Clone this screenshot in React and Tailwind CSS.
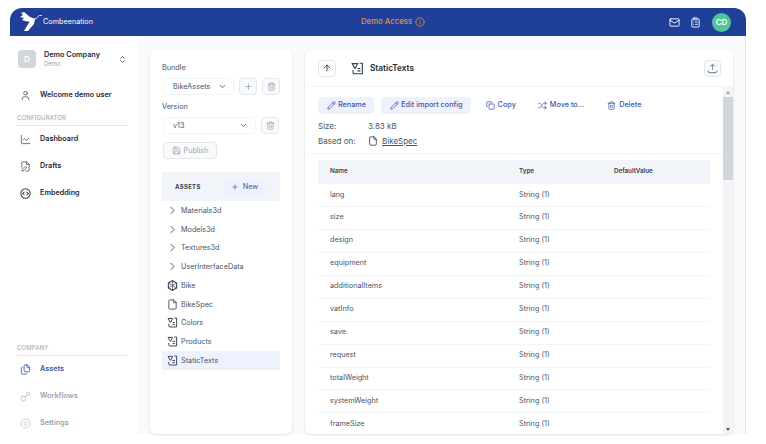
import {
  ArrowUp,
  ChevronDown,
  ChevronRight,
  ChevronsUpDown,
  ClipboardList,
  Copy,
  File,
  Files,
  Info,
  LineChart,
  Mail,
  Pencil,
  Plus,
  Shuffle,
  Trash2,
  User,
  FilePen,
  Save,
} from "lucide-react";

const assets = [
  { name: "Materials3d", type: "folder" },
  { name: "Models3d", type: "folder" },
  { name: "Textures3d", type: "folder" },
  { name: "UserInterfaceData", type: "folder" },
  { name: "Bike", type: "model" },
  { name: "BikeSpec", type: "file" },
  { name: "Colors", type: "text" },
  { name: "Products", type: "text" },
  { name: "StaticTexts", type: "text", active: true },
];

const rows = [
  "lang",
  "size",
  "design",
  "equipment",
  "additionalItems",
  "vatInfo",
  "save",
  "request",
  "totalWeight",
  "systemWeight",
  "frameSize",
];

const Logo = () => (
  <svg width="23" height="20" viewBox="0 0 23 20" fill="none">
    <path d="M0 5 L3 3 L1 1 L4 0 L10 5 L15 7 L11 10 L5 9 L2 8 L4 6 Z" fill="#fff" />
    <path d="M10 9 L15 7 L14 12 L8 19 L4 19 L7 14 Z" fill="#fff" />
    <path d="M14 7 Q17 7 18 4.5 Q19 3 22 3.5" stroke="#fff" strokeWidth="0.8" />
  </svg>
);

const TextsIcon = ({ size = 12 }) => (
  <svg
    width={size}
    height={size}
    viewBox="0 0 16 16"
    fill="none"
    stroke="#374151"
    strokeWidth="1.4"
    className="shrink-0"
  >
    <path d="M1.5 2h6.5L5.5 7.5h-1z" />
    <path d="M10.5 1.5h3.5v13H4.5a2 2 0 0 1-2-2V10" />
    <path d="M8 8h3.5M8 11h3.5" />
  </svg>
);

const ModelIcon = () => (
  <svg width="11" height="11" viewBox="0 0 16 16" fill="none" stroke="#374151" strokeWidth="1.6" className="shrink-0">
    <path d="M8 1l6 3.5v7L8 15l-6-3.5v-7z" />
    <path d="M2 4.5l6 3.5 6-3.5M8 8v7M2 11.5L8 8l6 3.5M8 1v7" strokeWidth="1" />
  </svg>
);

const EmbedIcon = ({ className }) => (
  <svg width="11" height="11" viewBox="0 0 16 16" fill="none" stroke="currentColor" strokeWidth="1.5" className={className}>
    <circle cx="8" cy="8" r="6.8" />
    <path d="M6.5 5.5L4 8l2.5 2.5M9.5 5.5L12 8l-2.5 2.5" />
  </svg>
);

const WorkflowIcon = ({ className }) => (
  <svg width="11" height="11" viewBox="0 0 16 16" fill="none" stroke="currentColor" strokeWidth="1.8" className={className}>
    <circle cx="5" cy="11" r="3.4" />
    <circle cx="12" cy="4" r="2.2" />
    <path d="M7.5 8.5l3-3" />
  </svg>
);

const GearIcon = ({ className }) => (
  <svg width="11" height="11" viewBox="0 0 16 16" fill="none" stroke="currentColor" strokeWidth="1.5" className={className}>
    <circle cx="8" cy="8" r="6.5" />
    <circle cx="8" cy="8" r="2.4" />
  </svg>
);

const UploadIcon = () => (
  <svg width="11" height="11" viewBox="0 0 16 16" fill="none" stroke="#8a919c" strokeWidth="1.5">
    <path d="M8 10V2M5 5l3-3 3 3" />
    <path d="M1.5 11c0 2 1 3 3 3h7c2 0 3-1 3-3" />
  </svg>
);

const AssetIcon = ({ type }) => {
  if (type === "folder")
    return <ChevronRight size={13} strokeWidth={1.6} className="text-gray-700 -ml-[1px]" />;
  if (type === "model") return <ModelIcon />;
  if (type === "file") return <File size={11} strokeWidth={1.8} className="text-gray-700" />;
  return <TextsIcon size={11} />;
};

const NavItem = ({ icon: Icon, label, className = "text-gray-800", iconClass = "text-gray-700" }) => (
  <div className={`h-[27px] flex items-center pl-[3px] font-semibold text-[7.25px] ${className}`}>
    <span className="w-[20px] shrink-0">
      <Icon size={11} strokeWidth={1.6} className={iconClass} />
    </span>
    {label}
  </div>
);

const SmallBtn = ({ icon: Icon }) => (
  <div className="w-[18px] h-[17px] flex items-center justify-center border border-gray-200 rounded-sm bg-gray-50">
    <Icon size={9} className="text-gray-400" />
  </div>
);

const Sidebar = () => (
  <aside className="w-[127px] shrink-0 bg-white pl-[7px] pr-[10px] pt-[14px] flex flex-col">
    <div className="flex items-center gap-[8px]">
      <div className="ml-[1px] w-[18px] h-[18px] rounded-sm bg-gray-300 text-white text-[8px] font-bold flex items-center justify-center">
        D
      </div>
      <div className="flex-1 leading-[9px]">
        <div className="text-[7.25px] font-semibold text-gray-800 whitespace-nowrap">Demo Company</div>
        <div className="text-[6px] text-gray-400">Demo</div>
      </div>
      <ChevronsUpDown size={9} strokeWidth={2} className="text-gray-700" />
    </div>
    <div className="mt-[13.5px]">
      <NavItem icon={User} label="Welcome demo user" />
    </div>
    <div className="mt-[4.5px] text-[6px] leading-[10px] text-gray-400 tracking-wide border-b border-gray-200 pb-[2px]">
      CONFIGURATOR
    </div>
    <NavItem icon={LineChart} label="Dashboard" />
    <NavItem icon={FilePen} label="Drafts" />
    <NavItem icon={EmbedIcon} label="Embedding" />
    <div className="mt-auto -mb-[3px]">
      <div className="text-[6px] leading-[10px] text-gray-400 tracking-wide border-b border-gray-200 pb-[2px]">
        COMPANY
      </div>
      <NavItem icon={Files} label="Assets" className="text-[#3f57a6]" iconClass="text-blue-800" />
      <NavItem icon={WorkflowIcon} label="Workflows" className="text-gray-400" iconClass="text-gray-300" />
      <NavItem icon={GearIcon} label="Settings" className="text-gray-400" iconClass="text-gray-300" />
    </div>
  </aside>
);

const AssetsPanel = () => (
  <section className="w-[142px] shrink-0 bg-white rounded-md shadow-sm px-[12px] pt-[12px] text-slate-600 text-[7.25px] leading-[11px]">
    <div>Bundle</div>
    <div className="mt-[5px] flex gap-[5px] pl-[1px]">
      <div className="w-[71px] h-[17px] border border-gray-100 rounded-sm flex items-center justify-between pl-[9px] pr-[6px]">
        BikeAssets
        <ChevronDown size={9} className="text-gray-700" />
      </div>
      <SmallBtn icon={Plus} />
      <SmallBtn icon={Trash2} />
    </div>
    <div className="mt-[6px]">Version</div>
    <div className="mt-[5px] flex gap-[5px] pl-[1px]">
      <div className="w-[93px] h-[17px] border border-gray-100 rounded-sm flex items-center justify-between pl-[9px] pr-[7px]">
        v13
        <ChevronDown size={9} className="text-gray-700" />
      </div>
      <SmallBtn icon={Trash2} />
    </div>
    <div className="mt-[8px] ml-[1px] w-[54px] h-[17px] border border-gray-200 bg-gray-50 rounded-sm flex items-center justify-center gap-[3px] text-gray-400">
      <Save size={9} />
      Publish
    </div>
    <div className="mt-[13px] h-[29px] bg-slate-100 flex items-center pl-[13px] pr-[14px] justify-between">
      <span className="text-[6px] font-bold tracking-wider text-gray-700">ASSETS</span>
      <span className="w-[43px] h-[16px] bg-indigo-50 rounded-sm flex items-center justify-center gap-[4px] text-[#3f57a6]">
        <Plus size={8} />
        New
      </span>
    </div>
    {assets.map((a) => (
      <div
        key={a.name}
        className={`h-[18.75px] flex items-center pl-[5px] ${a.active ? "bg-indigo-50" : ""}`}
      >
        <span className="w-[14px] shrink-0 flex items-center">
          <AssetIcon type={a.type} />
        </span>
        {a.name}
      </div>
    ))}
  </section>
);

const Action = ({ icon: Icon, label, filled, className = "" }) => (
  <div
    className={`h-[17px] flex items-center text-[#3f57a6] text-[7.25px] font-medium rounded-sm ${
      filled ? "bg-indigo-50 pl-[9px] pr-[8px] gap-[2px]" : "gap-[3px]"
    } ${className}`}
  >
    <Icon size={9} />
    {label}
  </div>
);

const DetailPanel = () => (
  <section className="flex-1 bg-white rounded-md shadow-sm flex flex-col overflow-hidden">
    <div className="h-[37px] shrink-0 flex items-center justify-between pl-[13px] pr-[12px] border-b border-gray-100">
      <div className="flex items-center">
        <div className="w-[18px] h-[17px] border border-gray-200 rounded-sm flex items-center justify-center">
          <ArrowUp size={10} className="text-gray-800" />
        </div>
        <span className="ml-[15px]">
          <TextsIcon size={13} />
        </span>
        <span className="ml-[6px] text-[8.25px] font-semibold text-gray-800">StaticTexts</span>
      </div>
      <div className="w-[17px] h-[17px] border border-gray-200 bg-gray-50 rounded-sm flex items-center justify-center">
        <UploadIcon />
      </div>
    </div>
    <div className="flex-1 flex min-h-0">
      <div className="flex-1 min-w-0 overflow-hidden">
        <div className="pl-[13px] pt-[9.5px] pb-[4.5px] border-b border-gray-100">
          <div className="flex items-center">
            <Action icon={Pencil} label="Rename" filled />
            <Action icon={Pencil} label="Edit import config" filled className="ml-[7px]" />
            <Action icon={Copy} label="Copy" className="ml-[15px]" />
            <Action icon={Shuffle} label="Move to..." className="ml-[22px]" />
            <Action icon={Trash2} label="Delete" className="ml-[23px]" />
          </div>
          <div className="mt-[5px] text-[8px] text-gray-600 leading-[15px]">
            <div className="flex">
              <span className="w-[50px]">Size:</span>3.83 kB
            </div>
            <div className="flex items-center">
              <span className="w-[50px]">Based on:</span>
              <File size={10} className="text-gray-700" />
              <span className="ml-[4px] underline">BikeSpec</span>
            </div>
          </div>
        </div>
        <div className="ml-[13px] mr-[13px] mt-[6px] text-[7.25px] text-gray-600">
          <div className="h-[24px] bg-slate-100 flex items-center pl-[12px] text-[6.25px] font-semibold text-gray-700">
            <span className="w-[189px]">Name</span>
            <span className="w-[95px]">Type</span>
            <span>DefaultValue</span>
          </div>
          {rows.map((r) => (
            <div key={r} className="h-[22.95px] flex items-center pl-[12px] border-b border-gray-100">
              <span className="w-[189px]">{r}</span>
              <span>String (1)</span>
            </div>
          ))}
        </div>
      </div>
      <div className="w-[10px] shrink-0 bg-gray-100 flex flex-col items-center">
        <div className="h-[10px] flex items-center">
          <div className="border-x-[2px] border-b-[3px] border-x-transparent border-b-gray-400" />
        </div>
        <div className="h-[83px] w-full bg-gray-300" />
        <div className="mt-auto h-[10px] flex items-center">
          <div className="border-x-[2px] border-t-[3px] border-x-transparent border-t-gray-600" />
        </div>
      </div>
    </div>
  </section>
);

export default function App() {
  return (
    <div
      className="w-[766px] h-[444px] bg-white overflow-hidden pt-2 pl-[10px] pr-[20px]"
      style={{ fontFamily: "Inter, sans-serif" }}
    >
      <div className="h-[426px] flex flex-col">
        <header className="h-[28px] shrink-0 bg-[#1f3f98] rounded-t-xl flex items-center pl-[10px] pr-[15px] text-white">
          <div className="w-[341px] flex items-center">
            <Logo />
            <span className="text-[7.25px]">Combeenation</span>
          </div>
          <span className="flex-1 flex items-center gap-[3px] text-[7.75px] font-medium text-[#e58f45]">
            Demo Access
            <Info size={10} />
          </span>
          <Mail size={11} className="mr-[10px]" />
          <ClipboardList size={11} className="mr-[11px]" />
          <div className="w-[19px] h-[19px] rounded-full bg-[#4fc59c] text-[8px] font-semibold flex items-center justify-center">
            CD
          </div>
        </header>
        <div className="flex-1 min-h-0 flex bg-slate-50 border-r border-gray-200">
          <Sidebar />
          <div className="flex-1 min-w-0 flex gap-[13px] pl-[13px] pr-[12px] pt-[14px]">
            <AssetsPanel />
            <DetailPanel />
          </div>
        </div>
      </div>
    </div>
  );
}
